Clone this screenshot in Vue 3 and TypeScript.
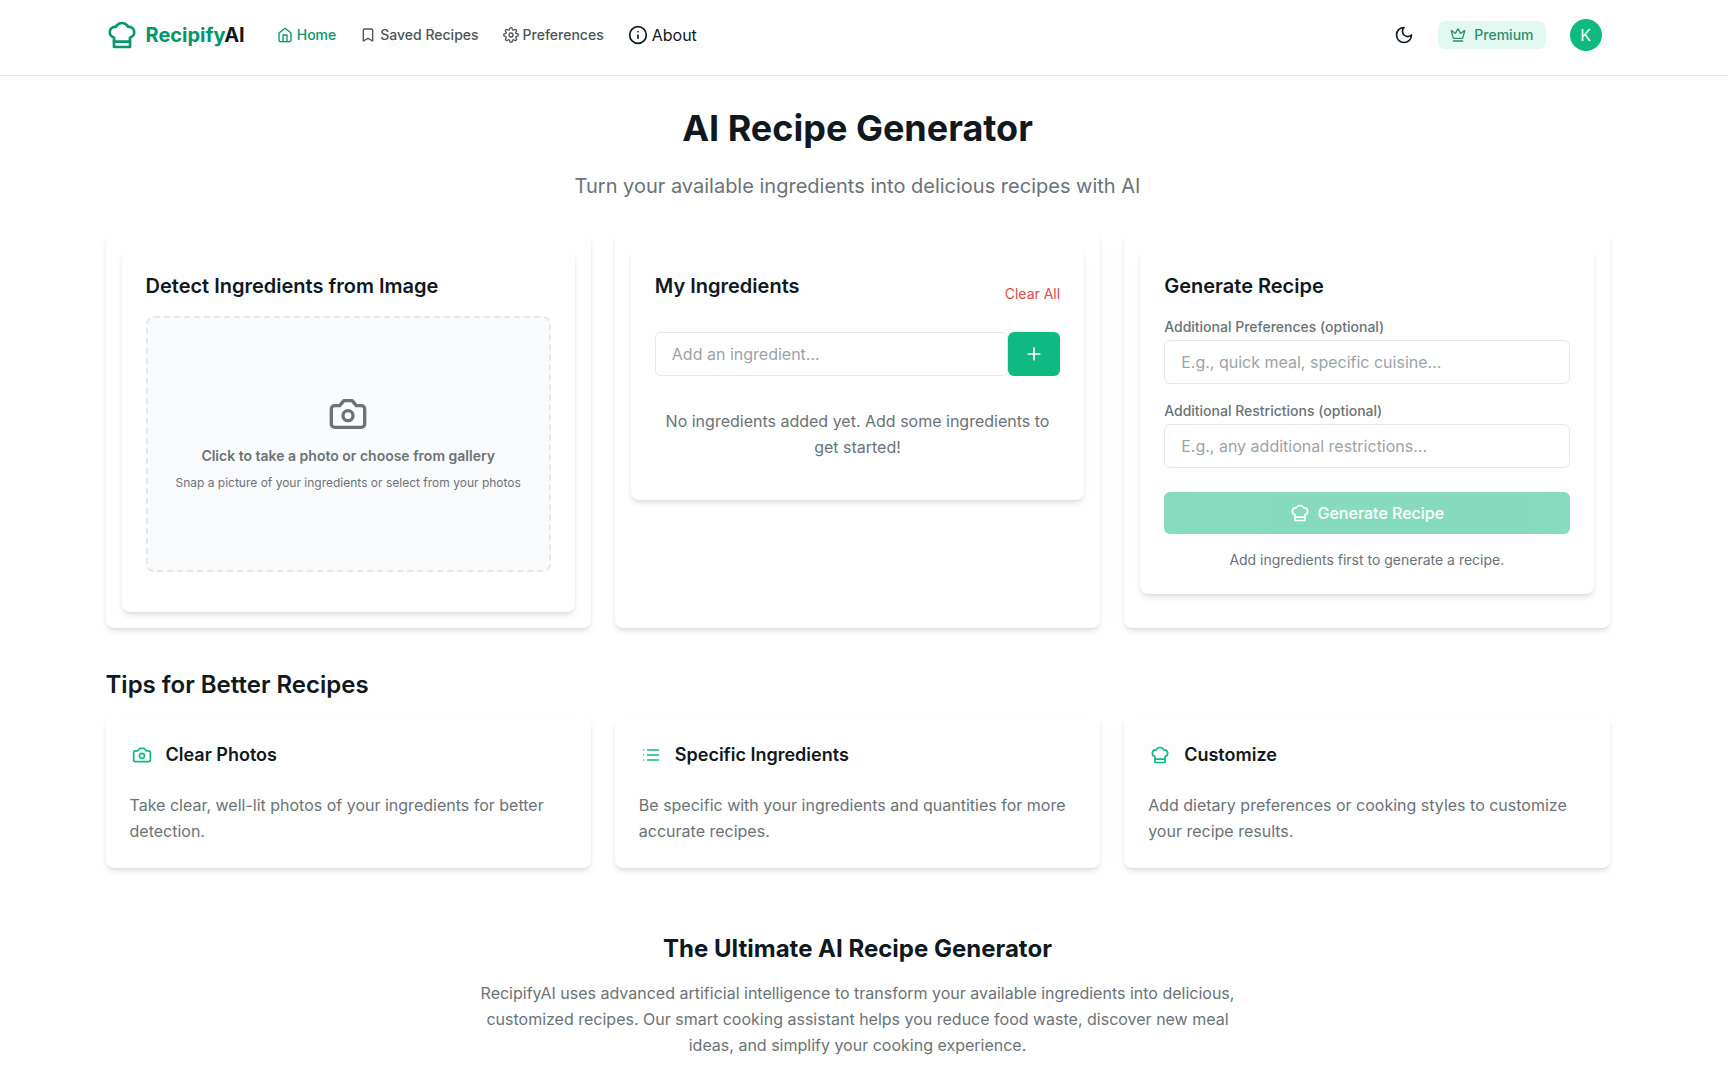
<script setup lang="ts">
import { ref, h, type FunctionalComponent } from 'vue'

const icons = {
  chef: [
    'M6 13.87A4 4 0 0 1 7.41 6a5.11 5.11 0 0 1 1.05-1.54 5 5 0 0 1 7.08 0A5.11 5.11 0 0 1 16.59 6 4 4 0 0 1 18 13.87V21H6Z',
    'M6 17h12',
  ],
  home: ['m3 9 9-7 9 7v11a2 2 0 0 1-2 2H5a2 2 0 0 1-2-2z', 'M9 22V12h6v10'],
  bookmark: ['m19 21-7-4-7 4V5a2 2 0 0 1 2-2h10a2 2 0 0 1 2 2v16z'],
  settings: [
    'M12.22 2h-.44a2 2 0 0 0-2 2v.18a2 2 0 0 1-1 1.73l-.43.25a2 2 0 0 1-2 0l-.15-.08a2 2 0 0 0-2.73.73l-.22.38a2 2 0 0 0 .73 2.73l.15.1a2 2 0 0 1 1 1.72v.51a2 2 0 0 1-1 1.74l-.15.09a2 2 0 0 0-.73 2.73l.22.38a2 2 0 0 0 2.73.73l.15-.08a2 2 0 0 1 2 0l.43.25a2 2 0 0 1 1 1.73V20a2 2 0 0 0 2 2h.44a2 2 0 0 0 2-2v-.18a2 2 0 0 1 1-1.73l.43-.25a2 2 0 0 1 2 0l.15.08a2 2 0 0 0 2.73-.73l.22-.39a2 2 0 0 0-.73-2.73l-.15-.08a2 2 0 0 1-1-1.74v-.5a2 2 0 0 1 1-1.74l.15-.09a2 2 0 0 0 .73-2.73l-.22-.38a2 2 0 0 0-2.73-.73l-.15.08a2 2 0 0 1-2 0l-.43-.25a2 2 0 0 1-1-1.73V4a2 2 0 0 0-2-2z',
    'M9 12a3 3 0 1 0 6 0a3 3 0 1 0-6 0',
  ],
  gear: [
    'M19.4 15a1.65 1.65 0 0 0 .33 1.82l.06.06a2 2 0 1 1-2.83 2.83l-.06-.06a1.65 1.65 0 0 0-2.8 1.17V21a2 2 0 0 1-4 0v-.09a1.65 1.65 0 0 0-2.9-1.26l-.06.06a2 2 0 1 1-2.83-2.83l.06-.06A1.65 1.65 0 0 0 3.09 14H3a2 2 0 0 1 0-4h.09a1.65 1.65 0 0 0 1.26-2.9l-.06-.06a2 2 0 1 1 2.83-2.83l.06.06A1.65 1.65 0 0 0 10 3.09V3a2 2 0 0 1 4 0v.09a1.65 1.65 0 0 0 2.82 1.18l.06-.06a2 2 0 1 1 2.83 2.83l-.06.06A1.65 1.65 0 0 0 20.91 10H21a2 2 0 0 1 0 4h-.09a1.65 1.65 0 0 0-1.51 1z',
    'M9 12a3 3 0 1 0 6 0a3 3 0 1 0-6 0',
  ],
  info: ['M2 12a10 10 0 1 0 20 0a10 10 0 1 0-20 0', 'M12 16v-4', 'M12 8h.01'],
  moon: ['M12 3a6 6 0 0 0 9 9 9 9 0 1 1-9-9Z'],
  crown: [
    'M11.562 3.266a.5.5 0 0 1 .876 0L15.39 8.87a1 1 0 0 0 1.516.294L21.183 5.5a.5.5 0 0 1 .798.519l-2.834 10.246a1 1 0 0 1-.956.734H5.81a1 1 0 0 1-.957-.734L2.02 6.02a.5.5 0 0 1 .798-.519l4.276 3.664a1 1 0 0 0 1.516-.294z',
    'M5 21h14',
  ],
  camera: [
    'M14.5 4h-5L7 7H4a2 2 0 0 0-2 2v9a2 2 0 0 0 2 2h16a2 2 0 0 0 2-2V9a2 2 0 0 0-2-2h-3l-2.5-3z',
    'M9 13a3 3 0 1 0 6 0a3 3 0 1 0-6 0',
  ],
  list: ['M8 6h13', 'M8 12h13', 'M8 18h13', 'M3 6h.01', 'M3 12h.01', 'M3 18h.01'],
  plus: ['M5 12h14', 'M12 5v14'],
}

type IconName = keyof typeof icons

const Icon: FunctionalComponent<{ name: IconName; size: number }> = (props) =>
  h(
    'svg',
    {
      width: props.size,
      height: props.size,
      viewBox: '0 0 24 24',
      fill: 'none',
      stroke: 'currentColor',
      'stroke-width': 2,
      'stroke-linecap': 'round',
      'stroke-linejoin': 'round',
      'aria-hidden': 'true',
    },
    icons[props.name].map((d) => h('path', { d })),
  )
Icon.props = ['name', 'size']

const links: { label: string; icon: IconName; size: number; kind: string }[] = [
  { label: 'Home', icon: 'home', size: 16, kind: 'active' },
  { label: 'Saved Recipes', icon: 'bookmark', size: 16, kind: '' },
  { label: 'Preferences', icon: 'gear', size: 16, kind: '' },
  { label: 'About', icon: 'info', size: 20, kind: 'large' },
]

const tips: { title: string; icon: IconName; text: string }[] = [
  { title: 'Clear Photos', icon: 'camera', text: 'Take clear, well-lit photos of your ingredients for better detection.' },
  { title: 'Specific Ingredients', icon: 'list', text: 'Be specific with your ingredients and quantities for more accurate recipes.' },
  { title: 'Customize', icon: 'chef', text: 'Add dietary preferences or cooking styles to customize your recipe results.' },
]

const ingredient = ref('')
const preferences = ref('')
const restrictions = ref('')
</script>

<template>
  <div class="page">
    <header class="header">
      <div class="container bar">
        <a class="logo" href="#">
          <Icon name="chef" :size="32" />
          <span>Recipify<span class="dark">AI</span></span>
        </a>
        <nav class="nav">
          <a v-for="l in links" :key="l.label" href="#" class="link" :class="l.kind">
            <Icon :name="l.icon" :size="l.size" />{{ l.label }}
          </a>
        </nav>
        <div class="actions">
          <button class="plain" type="button" aria-label="Toggle dark mode"><Icon name="moon" :size="20" /></button>
          <a class="premium" href="#"><Icon name="crown" :size="16" />Premium</a>
          <button class="avatar" type="button">K</button>
        </div>
      </div>
    </header>

    <main class="main">
      <div class="container">
        <h1>AI Recipe Generator</h1>
        <p class="subtitle">Turn your available ingredients into delicious recipes with AI</p>

        <div class="grid">
          <section class="card outer">
            <div class="card">
              <h2>Detect Ingredients from Image</h2>
              <button class="drop" type="button">
                <Icon name="camera" :size="40" />
                <span class="drop-title">Click to take a photo or choose from gallery</span>
                <span class="drop-text">Snap a picture of your ingredients or select from your photos</span>
              </button>
            </div>
          </section>

          <section class="card outer">
            <div class="card">
              <div class="title-row">
                <h2>My Ingredients</h2>
                <button class="clear" type="button">Clear All</button>
              </div>
              <form class="add" @submit.prevent>
                <input v-model="ingredient" type="text" placeholder="Add an ingredient..." aria-label="Ingredient" />
                <button class="add-button" type="submit" aria-label="Add"><Icon name="plus" :size="20" /></button>
              </form>
              <p class="empty">No ingredients added yet. Add some ingredients to get started!</p>
            </div>
          </section>

          <section class="card outer">
            <div class="card">
              <h2>Generate Recipe</h2>
              <div class="field">
                <label for="preferences">Additional Preferences (optional)</label>
                <input id="preferences" v-model="preferences" type="text" placeholder="E.g., quick meal, specific cuisine..." />
              </div>
              <div class="field">
                <label for="restrictions">Additional Restrictions (optional)</label>
                <input id="restrictions" v-model="restrictions" type="text" placeholder="E.g., any additional restrictions..." />
              </div>
              <button class="generate" type="button" disabled><Icon name="chef" :size="20" />Generate Recipe</button>
              <p class="hint">Add ingredients first to generate a recipe.</p>
            </div>
          </section>
        </div>

        <h2 class="section-title">Tips for Better Recipes</h2>
        <div class="grid">
          <article v-for="t in tips" :key="t.title" class="card">
            <h3><span class="tip-icon"><Icon :name="t.icon" :size="20" /></span>{{ t.title }}</h3>
            <p>{{ t.text }}</p>
          </article>
        </div>

        <section class="about">
          <h2>The Ultimate AI Recipe Generator</h2>
          <p>
            RecipifyAI uses advanced artificial intelligence to transform your available ingredients into delicious,
            customized recipes. Our smart cooking assistant helps you reduce food waste, discover new meal ideas, and
            simplify your cooking experience.
          </p>
        </section>
      </div>
    </main>
  </div>
</template>

<style>
body {
  background: #fefefe;
}
</style>

<style scoped>
.page {
  font-family: Inter, 'Liberation Sans', sans-serif;
  font-size: 16px;
  line-height: 26px;
  color: #6b7378;
}
.page * {
  box-sizing: border-box;
}
h1, h2, h3, p {
  margin: 0;
}
h1, h2, h3 {
  color: #101820;
}
a {
  text-decoration: none;
  color: inherit;
}
button, input {
  font: inherit;
  margin: 0;
}
button {
  border: 0;
  padding: 0;
  background: none;
  color: inherit;
  cursor: pointer;
}
.page :deep(svg) {
  display: block;
  flex: none;
}
.header {
  padding: 15px 13px 20px 0;
  border-bottom: 1px solid #e5e7eb;
}
.main {
  padding: 32px 13px 24px 0;
}
.container {
  max-width: 1536px;
  margin: 0 auto;
  padding: 0 16px;
}
.bar {
  display: flex;
  align-items: center;
  gap: 32px;
  height: 40px;
}
.logo {
  display: flex;
  align-items: center;
  gap: 8px;
  font-size: 20px;
  font-weight: 700;
  color: #059669;
}
.dark {
  color: #101820;
}
.nav {
  display: flex;
  align-items: center;
  gap: 24px;
}
.link {
  display: flex;
  align-items: center;
  gap: 4px;
  font-size: 14px;
  font-weight: 500;
  color: #4b5558;
}
.link.active {
  color: #059669;
}
.link.large {
  font-size: 16px;
  font-weight: 400;
  color: #101820;
}
.actions {
  display: flex;
  align-items: center;
  gap: 24px;
  margin-left: auto;
  padding-right: 8px;
}
.plain {
  color: #101820;
}
.premium {
  display: flex;
  align-items: center;
  gap: 8px;
  height: 28px;
  padding: 0 12px;
  border-radius: 8px;
  background: #e3f8f0;
  font-size: 14px;
  font-weight: 500;
  color: #2b8f6c;
}
.avatar {
  width: 32px;
  height: 32px;
  border-radius: 50%;
  background: #10b981;
  color: #fff;
}
h1 {
  font-size: 36px;
  line-height: 40px;
  font-weight: 700;
  text-align: center;
  margin-bottom: 24px;
}
.subtitle {
  font-size: 20px;
  line-height: 28px;
  text-align: center;
  margin-bottom: 32px;
}
.grid {
  display: grid;
  grid-template-columns: repeat(3, minmax(0, 1fr));
  gap: 24px;
}
.card {
  padding: 24px;
  border-radius: 8px;
  background: #fefefe;
  box-shadow: 0 4px 6px -1px rgba(0, 0, 0, 0.1), 0 2px 4px -2px rgba(0, 0, 0, 0.1);
}
.card.outer {
  padding: 16px;
}
.card h2 {
  font-size: 20px;
  line-height: 28px;
  font-weight: 600;
  margin-bottom: 16px;
}
.drop {
  display: flex;
  flex-direction: column;
  align-items: center;
  justify-content: center;
  width: 100%;
  height: 256px;
  margin-bottom: 16px;
  padding-bottom: 2px;
  border: 2px dashed #e5e7eb;
  border-radius: 8px;
  background: #f9fafb;
}
.drop-title {
  margin: 10px 0 6px;
  font-size: 14px;
  line-height: 23px;
  font-weight: 600;
}
.drop-text {
  font-size: 12px;
  line-height: 20px;
}
.title-row {
  display: flex;
  align-items: center;
  justify-content: space-between;
  margin-bottom: 16px;
}
.clear {
  font-size: 14px;
  color: #e04a4a;
}
input {
  width: 100%;
  height: 44px;
  padding: 0 16px;
  border: 1px solid #e5e7eb;
  border-radius: 6px;
  background: #fff;
  color: #101820;
}
input::placeholder {
  color: #9ca3a8;
  opacity: 1;
}
.add {
  display: flex;
}
.add input {
  flex: 1;
  min-width: 0;
}
.add-button {
  padding: 0 16px;
  border-radius: 6px;
  background: #10b981;
  color: #fff;
}
.empty {
  padding: 32px 0 16px;
  text-align: center;
}
.field {
  margin-bottom: 16px;
}
label {
  display: block;
  margin-bottom: 2px;
  font-size: 14px;
  line-height: 22px;
  font-weight: 500;
}
.generate {
  display: flex;
  align-items: center;
  justify-content: center;
  gap: 8px;
  width: 100%;
  height: 42px;
  margin: 24px 0 16px;
  border-radius: 6px;
  background: #10b981;
  color: #fff;
  font-weight: 500;
  opacity: 0.5;
}
.hint {
  font-size: 14px;
  line-height: 20px;
  text-align: center;
}
.section-title {
  margin: 40px 0 14px;
  font-size: 24px;
  line-height: 34px;
  font-weight: 600;
}
h3 {
  display: flex;
  align-items: center;
  gap: 12px;
  margin-bottom: 22px;
  font-size: 18px;
  line-height: 30px;
  font-weight: 600;
}
.tip-icon {
  padding: 0 2px;
  color: #10b981;
}
.about {
  max-width: 768px;
  margin: 64px auto 0;
  text-align: center;
}
.about h2 {
  margin-bottom: 14px;
  font-size: 24px;
  line-height: 34px;
  font-weight: 700;
}
</style>
